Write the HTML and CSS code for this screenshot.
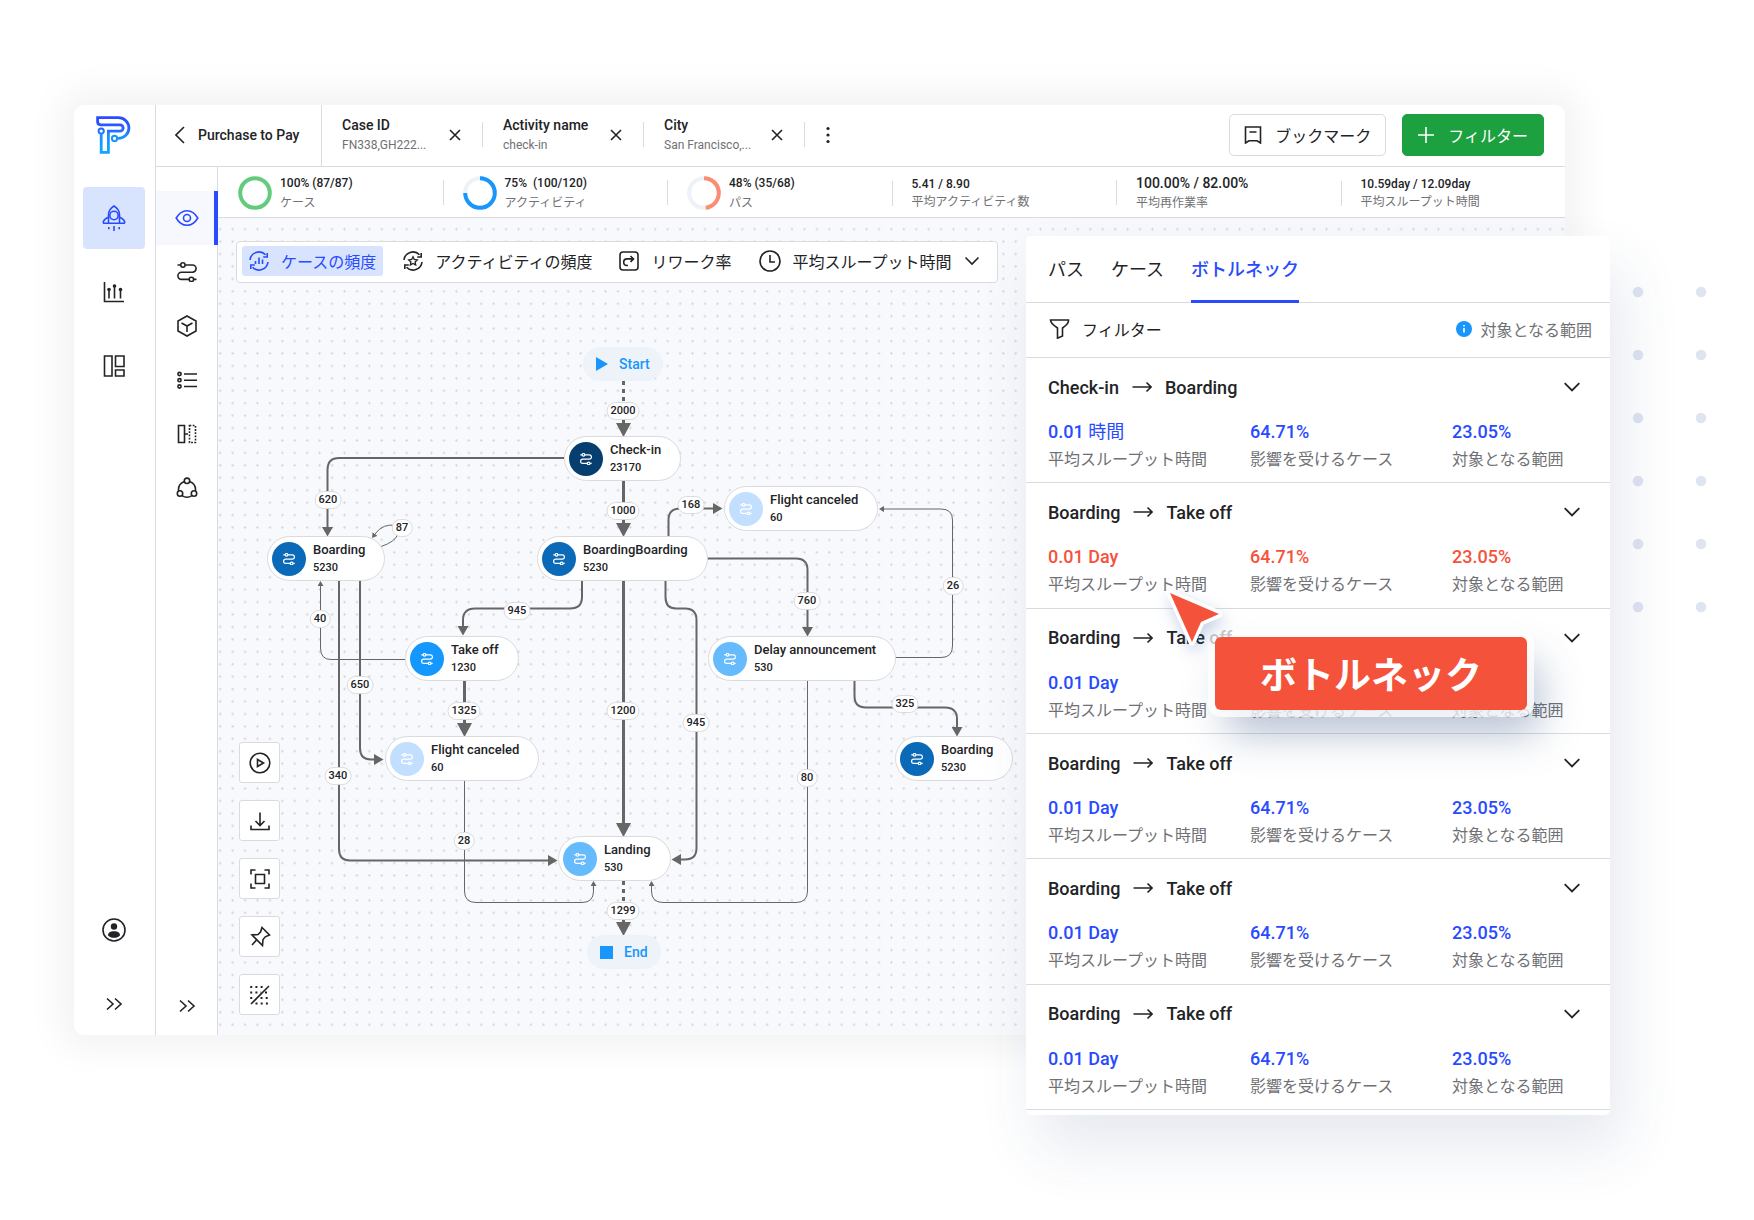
FILE: index.html
```html
<!DOCTYPE html>
<html lang="ja">
<head>
<meta charset="utf-8">
<meta name="viewport" content="width=device-width, initial-scale=1">
<title>Purchase to Pay</title>
<link rel="stylesheet" href="styles.css">
</head>
<body>
<svg class="sprite" aria-hidden="true">
  <symbol id="route" viewBox="0 0 20 20"><path d="M.5 3h3M8.2 3h7.3a3.6 3.6 0 0 1 0 7.2h-11a3.6 3.6 0 0 0 0 7.2h7.6M16.8 17.4h2.7"/><circle cx="5.9" cy="3" r="2.2"/><circle cx="14.4" cy="17.4" r="2.2"/></symbol>
  <symbol id="more" viewBox="0 0 18 14"><path d="M2 1.500l6 5.500-6 5.500M10 1.500l6 5.500-6 5.500"/></symbol>
  <symbol id="down" viewBox="0 0 16 16"><path d="M1.500 4.500L8 11l6.500-6.500"/></symbol>
  <symbol id="close" viewBox="0 0 12 12"><path d="M1 1l10 10M11 1L1 11"/></symbol>
  <symbol id="arrow" viewBox="0 0 20 12"><path d="M.5 6H19M14.500 1.500L19 6l-4.500 4.500"/></symbol>
</svg>

<main class="page">
  <div class="app">
    <nav class="rail" aria-label="Main">
      <svg class="logo" viewBox="0 0 36 38" role="img" aria-label="Logo">
        <defs><linearGradient id="brand" gradientUnits="userSpaceOnUse" x1="0" y1="4" x2="0" y2="32"><stop offset="0" stop-color="#2a4bff"/><stop offset=".35" stop-color="#2668ff"/><stop offset=".55" stop-color="#1a90ff"/><stop offset="1" stop-color="#12a2ff"/></linearGradient></defs>
        <path d="M21.200 22.400H22.500A10.400 10.400 0 0 0 22.500 1.600H1.600V5.500Q1.600 8.900 5 8.900H24A3 3 0 0 1 24 15.200H12.400V36.300H5.200V18" fill="none" stroke="url(#brand)" stroke-width="2.800"/>
        <circle cx="5.200" cy="15" r="2.600" fill="none" stroke="url(#brand)" stroke-width="2"/>
        <circle cx="18.500" cy="22.400" r="2.600" fill="none" stroke="url(#brand)" stroke-width="2"/>
      </svg>
      <button class="rail-item active" aria-label="Process">
        <svg width="24" height="26" viewBox="0 0 24 26"><path d="M6.500 18V10C6.500 5.500 9 2.800 12 1c3 1.800 5.500 4.500 5.500 9v8M1 18.300h22M1.200 18c0-2.500 2-4.500 5.300-6M22.800 18c0-2.500-2-4.500-5.300-6"/><circle cx="12" cy="10.500" r="4.200"/><path d="M12 21v5M6.800 22v2.200M17.200 22v2.200"/></svg>
      </button>
      <button class="rail-item" aria-label="Charts">
        <svg width="22" height="22" viewBox="0 0 22 22"><path d="M1.500 1v19.500H21M6 17.500V9M11.500 17.500V6M17.500 17.500V9"/><g fill="currentColor" stroke="none"><circle cx="6" cy="8.500" r="1.800"/><circle cx="11.500" cy="5" r="1.800"/><circle cx="17.500" cy="8.500" r="1.800"/></g></svg>
      </button>
      <button class="rail-item" aria-label="Dashboard">
        <svg width="22" height="22" viewBox="0 0 22 22"><path d="M1.500 1h7.500v20H1.500zM12.500 1H21v10.500h-8.500zM12.500 15H21v6h-8.500z"/></svg>
      </button>
      <span class="spacer"></span>
      <button class="rail-item" aria-label="Account">
        <svg width="24" height="24" viewBox="0 0 24 24"><circle cx="12" cy="12" r="11"/><g fill="currentColor" stroke="none"><circle cx="12" cy="8.500" r="3.200"/><path d="M6 17.500c0-3 2.500-4.300 6-4.300s6 1.300 6 4.300c-1.500 1.600-3.500 2.300-6 2.300s-4.500-.7-6-2.300z"/></g></svg>
      </button>
      <button class="rail-item" aria-label="Expand"><svg width="18" height="14"><use href="#more"/></svg></button>
    </nav>

    <div class="workspace">
      <header class="topbar">
        <button class="back"><svg width="10" height="18" viewBox="0 0 10 18"><path d="M9 1L1 9l8 8"/></svg>Purchase to Pay</button>
        <div class="chip"><div><b>Case ID</b><small>FN338,GH222...</small></div><button aria-label="Remove Case ID"><svg width="12" height="12"><use href="#close"/></svg></button></div>
        <div class="chip"><div><b>Activity name</b><small>check-in</small></div><button aria-label="Remove Activity name"><svg width="12" height="12"><use href="#close"/></svg></button></div>
        <div class="chip"><div><b>City</b><small>San Francisco,...</small></div><button aria-label="Remove City"><svg width="12" height="12"><use href="#close"/></svg></button></div>
        <button class="kebab" aria-label="More"><svg width="4" height="18" viewBox="0 0 4 18"><g fill="currentColor" stroke="none"><circle cx="2" cy="2.500" r="1.600"/><circle cx="2" cy="9" r="1.600"/><circle cx="2" cy="15.500" r="1.600"/></g></svg></button>
        <span class="spacer"></span>
        <button class="btn"><svg width="18" height="18" viewBox="0 0 18 18"><path d="M1.500 1h15v16L13 14.800H5L1.500 17zM5.500 6h7"/></svg>ブックマーク</button>
        <button class="btn primary"><svg width="16" height="16" viewBox="0 0 16 16"><path d="M8 0v16M0 8h16"/></svg>フィルター</button>
      </header>

      <div class="lower">
        <nav class="subrail" aria-label="View">
          <button class="sub-item active" aria-label="Overview"><svg width="24" height="18" viewBox="0 0 24 18"><path d="M1.200 9C4 4.200 7.500 1.700 12 1.700S20 4.200 22.800 9C20 13.800 16.500 16.300 12 16.300S4 13.800 1.200 9z"/><circle cx="12" cy="9" r="3.500"/></svg></button>
          <button class="sub-item" aria-label="Route"><svg width="20" height="20"><use href="#route"/></svg></button>
          <button class="sub-item" aria-label="Object"><svg width="20" height="22" viewBox="0 0 20 22"><path d="M10 1l9 5v10l-9 5-9-5V6zM4.500 8L10 11l5.500-3M10 11v6"/></svg></button>
          <button class="sub-item" aria-label="List"><svg width="20" height="18" viewBox="0 0 20 18"><path d="M7 3h13M7 9.200h13M7 15.500h13"/><circle cx="2.500" cy="3" r="1.600"/><circle cx="2.500" cy="9.200" r="1.600"/><circle cx="2.500" cy="15.500" r="1.600"/></svg></button>
          <button class="sub-item" aria-label="Compare"><svg width="20" height="20" viewBox="0 0 20 20"><path d="M1.500 1.500h6v17h-6zM8 10h3"/><path d="M12.500 1.500h6v17h-6z" stroke-dasharray="1.800 1.400"/></svg></button>
          <button class="sub-item" aria-label="Cycle"><svg width="22" height="22" viewBox="0 0 22 22"><circle cx="11" cy="3.800" r="2.700"/><circle cx="4" cy="16.500" r="2.700"/><circle cx="18" cy="16.500" r="2.700"/><path d="M8.300 4.600C4 6.300 2.100 10 2.600 14.100M13.700 4.600C18 6.300 19.900 10 19.400 14.100M6 18.600C9 20.600 13 20.600 16 18.600"/></svg></button>
          <span class="spacer"></span>
          <button class="sub-item" aria-label="Expand"><svg width="18" height="14"><use href="#more"/></svg></button>
        </nav>

        <section class="content">
          <div class="stats">
            <div class="stat"><svg class="ring" viewBox="0 0 34 34"><circle cx="17" cy="17" r="14.800" stroke="#63cc7c"/></svg><div><b>100% (87/87)</b><small>ケース</small></div></div>
            <div class="stat"><svg class="ring" viewBox="0 0 34 34"><circle cx="17" cy="17" r="14.800" stroke="#ecf2f8"/><circle cx="17" cy="17" r="14.800" stroke="#1896fc" pathLength="100" stroke-dasharray="75 100" transform="rotate(-90 17 17)"/></svg><div><b>75%&nbsp; (100/120)</b><small>アクティビティ</small></div></div>
            <div class="stat"><svg class="ring" viewBox="0 0 34 34"><circle cx="17" cy="17" r="14.800" stroke="#ecf2f8"/><circle cx="17" cy="17" r="14.800" stroke="#fc8d75" pathLength="100" stroke-dasharray="48 100" transform="rotate(-90 17 17)"/></svg><div><b>48% (35/68)</b><small>パス</small></div></div>
            <div class="stat plain"><div><b>5.41 / 8.90</b><small>平均アクティビティ数</small></div></div>
            <div class="stat large"><div><b>100.00% / 82.00%</b><small>平均再作業率</small></div></div>
            <div class="stat plain"><div><b>10.59day / 12.09day</b><small>平均スループット時間</small></div></div>
          </div>

          <div class="canvas">
            <svg class="edges" aria-hidden="true">
              <defs>
                <pattern id="dots" width="12.430" height="12.430" patternUnits="userSpaceOnUse" x="-4" y="5"><circle cx="6.200" cy="6.200" r="1.100" fill="#cfd1d7"/></pattern>
                <marker id="big" markerUnits="userSpaceOnUse" markerWidth="15" markerHeight="15" refX="0" refY="7.500" orient="auto"><path d="M0 0l14 7.500-14 7.500z" fill="#666"/></marker>
                <marker id="mid" markerUnits="userSpaceOnUse" markerWidth="10" markerHeight="11" refX="0" refY="5.500" orient="auto"><path d="M0 0l9.500 5.500-9.500 5.500z" fill="#666"/></marker>
                <marker id="small" markerUnits="userSpaceOnUse" markerWidth="6" markerHeight="6" refX="0" refY="3" orient="auto"><path d="M0 0l5 3-5 3z" fill="#666"/></marker>
              </defs>
              <rect width="100%" height="100%" fill="url(#dots)"/>
              <g class="heavy">
                <path d="M405.500 163v22" stroke-dasharray="4 4"/>
                <path d="M405.500 198v7" marker-end="url(#big)"/>
                <path d="M405.500 263v42" marker-end="url(#big)"/>
                <path d="M405.500 363v242" marker-end="url(#big)"/>
                <path d="M405.500 663v22" stroke-dasharray="4 4"/>
                <path d="M405.500 698v6" marker-end="url(#big)"/>
                <path d="M246.500 463v42" marker-end="url(#big)"/>
              </g>
              <g class="medium">
                <path d="M346 240H121Q109.500 240 109.500 252V309" marker-end="url(#mid)"/>
                <path d="M121 363V631Q121 642.500 132 642.500H330" marker-end="url(#mid)"/>
                <path d="M142 363V530Q142 541.500 153 541.500H156" marker-end="url(#mid)"/>
                <path d="M450.500 320V302Q450.500 290.500 462 290.500H495" marker-end="url(#mid)"/>
                <path d="M489 340.500H578Q589.500 340.500 589.500 352V409" marker-end="url(#mid)"/>
                <path d="M364 363V379Q364 390.500 352 390.500H257Q245 390.500 245 402V408" marker-end="url(#mid)"/>
                <path d="M447.500 363V379Q447.500 390.500 458 390.500H467Q478.500 390.500 478.500 402V630Q478.500 641.500 467 641.500H463" marker-end="url(#mid)"/>
                <path d="M636.500 463V478Q636.500 489.500 648 489.500H727Q739 489.500 739 501V509" marker-end="url(#mid)"/>
              </g>
              <g class="light">
                <path d="M163 328.500Q177 324 180 316"/>
                <path d="M178 307.500Q165 305 157 316" marker-end="url(#small)"/>
                <path d="M187 441.500H113Q102.500 441.500 102.500 430V368" marker-end="url(#small)"/>
                <path d="M246.500 563V673Q246.500 684.500 258 684.500H364Q375.500 684.500 375.500 673V668" marker-end="url(#small)"/>
                <path d="M589.500 463V673Q589.500 684.500 578 684.500H445Q433.500 684.500 433.500 673V668" marker-end="url(#small)"/>
                <path d="M675 439.500H723Q734.500 439.500 734.500 428V302Q734.500 291 723 291H666" marker-end="url(#small)"/>
              </g>
            </svg>

            <span class="terminal" style="left:365px;top:129px"><svg width="12" height="14" viewBox="0 0 12 14"><path d="M0 0l12 7-12 7z"/></svg>Start</span>
            <span class="terminal" style="left:369px;top:717px"><svg width="13" height="13" viewBox="0 0 13 13"><path d="M0 0h13v13H0z"/></svg>End</span>

            <button class="node tone-5" style="left:346px;top:218px"><i><svg><use href="#route"/></svg></i><span><b>Check-in</b><small>23170</small></span></button>
            <button class="node tone-1" style="left:506px;top:268px"><i><svg><use href="#route"/></svg></i><span><b>Flight canceled</b><small>60</small></span></button>
            <button class="node tone-4" style="left:49px;top:318px"><i><svg><use href="#route"/></svg></i><span><b>Boarding</b><small>5230</small></span></button>
            <button class="node tone-4" style="left:319px;top:318px"><i><svg><use href="#route"/></svg></i><span><b>BoardingBoarding</b><small>5230</small></span></button>
            <button class="node tone-3" style="left:187px;top:418px"><i><svg><use href="#route"/></svg></i><span><b>Take off</b><small>1230</small></span></button>
            <button class="node tone-2" style="left:490px;top:418px"><i><svg><use href="#route"/></svg></i><span><b>Delay announcement</b><small>530</small></span></button>
            <button class="node tone-1" style="left:167px;top:518px"><i><svg><use href="#route"/></svg></i><span><b>Flight canceled</b><small>60</small></span></button>
            <button class="node tone-4" style="left:677px;top:518px"><i><svg><use href="#route"/></svg></i><span><b>Boarding</b><small>5230</small></span></button>
            <button class="node tone-2" style="left:340px;top:618px"><i><svg><use href="#route"/></svg></i><span><b>Landing</b><small>530</small></span></button>

            <span class="count" style="left:405px;top:193px">2000</span>
            <span class="count" style="left:405px;top:293px">1000</span>
            <span class="count" style="left:110px;top:282px">620</span>
            <span class="count" style="left:184px;top:310px">87</span>
            <span class="count" style="left:102px;top:401px">40</span>
            <span class="count" style="left:142px;top:467px">650</span>
            <span class="count" style="left:473px;top:287px">168</span>
            <span class="count" style="left:299px;top:393px">945</span>
            <span class="count" style="left:589px;top:383px">760</span>
            <span class="count" style="left:735px;top:368px">26</span>
            <span class="count" style="left:687px;top:486px">325</span>
            <span class="count" style="left:478px;top:505px">945</span>
            <span class="count" style="left:246px;top:493px">1325</span>
            <span class="count" style="left:405px;top:493px">1200</span>
            <span class="count" style="left:589px;top:560px">80</span>
            <span class="count" style="left:246px;top:623px">28</span>
            <span class="count" style="left:120px;top:558px">340</span>
            <span class="count" style="left:405px;top:693px">1299</span>

            <div class="toolbar">
              <button class="mode active"><svg width="20" height="20" viewBox="0 0 20 20"><path d="M1 9A9 9 0 0 1 16.500 3.800M19 11A9 9 0 0 1 3.500 16.200M18.200 2v4h-4M1.800 18v-4h4M6.500 13V10M10 13V6.500M13.500 13V8.500"/></svg>ケースの頻度</button>
              <button class="mode"><svg width="20" height="20" viewBox="0 0 20 20"><path d="M1 9A9 9 0 0 1 16.500 3.800M19 11A9 9 0 0 1 3.500 16.200M18.200 2v4h-4M1.800 18v-4h4"/><path d="M10 5.800l1.300 2.700 3 .4-2.200 2.100.6 3-2.700-1.500-2.700 1.500.6-3-2.200-2.100 3-.4z" stroke-width="1.300"/></svg>アクティビティの頻度</button>
              <button class="mode"><svg width="20" height="20" viewBox="0 0 20 20"><rect x="1" y="1" width="18" height="18" rx="3"/><path d="M9 14.500H8a3.300 3.300 0 0 1 0-6.600h6M11.500 5l3 2.900-3 2.900"/></svg>リワーク率</button>
              <button class="mode"><svg width="22" height="22" viewBox="0 0 22 22"><circle cx="11" cy="11" r="10"/><path d="M11 5v7h5"/></svg>平均スループット時間<svg width="16" height="16"><use href="#down"/></svg></button>
            </div>

            <div class="tools">
              <button aria-label="Play"><svg viewBox="0 0 22 22"><circle cx="11" cy="11" r="9.800"/><path d="M8.500 7.500l6 3.500-6 3.500z"/></svg></button>
              <button aria-label="Download"><svg viewBox="0 0 22 22"><path d="M11 2.500v12.500M6.500 11l4.500 4.500 4.500-4.500M2 15.500v4h18v-4"/></svg></button>
              <button aria-label="Fit"><svg viewBox="0 0 22 22"><path d="M2 6.500V2h4.500M15.500 2H20v4.500M20 15.500V20h-4.500M6.500 20H2v-4.500M6.500 6.500h9v9h-9z"/></svg></button>
              <button aria-label="Pin"><svg viewBox="0 0 22 22"><path d="M13 1.500L20.500 9l-4.200 1.800L14 13.500l-.5 6L3 9l6-.5L11.500 6zM7.500 14L3 19"/></svg></button>
              <button aria-label="Hide grid"><svg viewBox="0 0 22 22"><path d="M2 20L20 2"/><path d="M1.200 3h15M1.200 8.500h11M1.200 14h5M16 8.500h5M11.500 14H21M6.500 19.500H21" stroke-width="2" stroke-dasharray="2 3.200"/></svg></button>
            </div>
          </div>
        </section>
      </div>
    </div>
  </div>

  <svg class="backdrop" aria-hidden="true"><defs><pattern id="bigdots" width="63" height="63" patternUnits="userSpaceOnUse"><circle cx="6" cy="6" r="5.300" fill="#dfe4f1"/></pattern></defs><rect width="100%" height="100%" fill="url(#bigdots)"/></svg>

  <aside class="panel">
    <div class="tabs" role="tablist">
      <button role="tab">パス</button>
      <button role="tab">ケース</button>
      <button role="tab" aria-selected="true" class="active">ボトルネック</button>
    </div>
    <div class="filter">
      <button><svg width="21" height="20" viewBox="0 0 21 20"><path d="M1.500 1h18c.5 3-1.500 5-6 8v8l-5 2.200V9C4 6 1.500 4 1.500 1z"/></svg>フィルター</button>
      <span class="note"><svg width="16" height="16" viewBox="0 0 16 16"><circle cx="8" cy="8" r="8" fill="#1896fc"/><path d="M8 7v4.500M8 4v1.600" stroke="#fff" stroke-width="1.600"/></svg>対象となる範囲</span>
    </div>
    <ul class="paths">
      <li><h3>Check-in<svg width="20" height="12"><use href="#arrow"/></svg>Boarding<button aria-label="Open"><svg width="18" height="18"><use href="#down"/></svg></button></h3>
        <dl><div><dd>0.01 <span class="unit">時間</span></dd><dt>平均スループット時間</dt></div><div><dd>64.71%</dd><dt>影響を受けるケース</dt></div><div><dd>23.05%</dd><dt>対象となる範囲</dt></div></dl></li>
      <li class="alert"><h3>Boarding<svg width="20" height="12"><use href="#arrow"/></svg>Take off<button aria-label="Open"><svg width="18" height="18"><use href="#down"/></svg></button></h3>
        <dl><div><dd>0.01 Day</dd><dt>平均スループット時間</dt></div><div><dd>64.71%</dd><dt>影響を受けるケース</dt></div><div><dd>23.05%</dd><dt>対象となる範囲</dt></div></dl></li>
      <li><h3>Boarding<svg width="20" height="12"><use href="#arrow"/></svg>Take off<button aria-label="Open"><svg width="18" height="18"><use href="#down"/></svg></button></h3>
        <dl><div><dd>0.01 Day</dd><dt>平均スループット時間</dt></div><div><dd>64.71%</dd><dt>影響を受けるケース</dt></div><div><dd>23.05%</dd><dt>対象となる範囲</dt></div></dl></li>
      <li><h3>Boarding<svg width="20" height="12"><use href="#arrow"/></svg>Take off<button aria-label="Open"><svg width="18" height="18"><use href="#down"/></svg></button></h3>
        <dl><div><dd>0.01 Day</dd><dt>平均スループット時間</dt></div><div><dd>64.71%</dd><dt>影響を受けるケース</dt></div><div><dd>23.05%</dd><dt>対象となる範囲</dt></div></dl></li>
      <li><h3>Boarding<svg width="20" height="12"><use href="#arrow"/></svg>Take off<button aria-label="Open"><svg width="18" height="18"><use href="#down"/></svg></button></h3>
        <dl><div><dd>0.01 Day</dd><dt>平均スループット時間</dt></div><div><dd>64.71%</dd><dt>影響を受けるケース</dt></div><div><dd>23.05%</dd><dt>対象となる範囲</dt></div></dl></li>
      <li><h3>Boarding<svg width="20" height="12"><use href="#arrow"/></svg>Take off<button aria-label="Open"><svg width="18" height="18"><use href="#down"/></svg></button></h3>
        <dl><div><dd>0.01 Day</dd><dt>平均スループット時間</dt></div><div><dd>64.71%</dd><dt>影響を受けるケース</dt></div><div><dd>23.05%</dd><dt>対象となる範囲</dt></div></dl></li>
    </ul>
    <strong class="callout">ボトルネック</strong>
    <svg class="pointer" viewBox="0 0 60 60" aria-hidden="true"><path d="M5 5L54 26 36 34 27 54z" fill="#fff" stroke="#fff" stroke-width="7" stroke-linejoin="round"/><path d="M5 5L54 26 36 34 27 54z" fill="#f5523b"/></svg>
  </aside>
</main>
</body>
</html>
```

FILE: styles.css
```css
:root {
  --ink: #222326;
  --muted: #707175;
  --line: #dadbdf;
  --blue: #294bff;
  --tint: #d8e4fd;
  --canvas: #f8f9fc;
}

* { box-sizing: border-box; }

body {
  margin: 0;
  background: #fff;
  color: var(--ink);
  font-family: Roboto, "Noto Sans CJK JP", sans-serif;
  font-size: 16px;
}

button {
  margin: 0;
  padding: 0;
  border: 0;
  background: none;
  color: inherit;
  font: inherit;
  cursor: pointer;
}

svg {
  flex: none;
  fill: none;
  stroke: currentColor;
  stroke-width: 1.6;
}

b, h3, dd { font-weight: 500; }
small { font-size: 12px; color: var(--muted); }

.sprite { position: absolute; width: 0; height: 0; }
.spacer { flex: 1; }

.page {
  position: relative;
  display: grid;
  min-height: 100vh;
  padding: 105px 189px 185px 74px;
  overflow: hidden;
}

.app {
  display: flex;
  min-width: 0;
  border-radius: 10px;
  background: #fff;
  box-shadow: 0 0 36px 14px rgba(0, 0, 0, .05);
}

/* Main navigation */
.rail {
  display: flex;
  flex-direction: column;
  align-items: center;
  gap: 12px;
  width: 82px;
  padding: 11px 1px 0 0;
  border-right: 1px solid var(--line);
}
.logo { width: 36px; height: 38px; margin-bottom: 21px; }
.rail-item {
  display: grid;
  place-items: center;
  width: 62px;
  height: 62px;
  border-radius: 4px;
}
.rail-item.active { background: var(--tint); color: var(--blue); }

.workspace { display: flex; flex: 1; flex-direction: column; min-width: 0; }

/* Top bar */
.topbar {
  display: flex;
  align-items: center;
  height: 62px;
  padding: 0 21px 2px 0;
  border-bottom: 1px solid var(--line);
}
.back {
  display: flex;
  align-items: center;
  align-self: stretch;
  gap: 13px;
  width: 166px;
  margin-bottom: -2px;
  padding: 0 0 2px 19px;
  border-right: 1px solid var(--line);
  font-size: 14px;
  font-weight: 500;
}
.chip {
  display: flex;
  align-items: center;
  justify-content: space-between;
  width: 161px;
  padding: 0 22px 0 20px;
  position: relative;
  white-space: nowrap;
}
.chip::after, .stat + .stat::before {
  content: "";
  position: absolute;
  right: 0;
  width: 1px;
  height: 25px;
  background: var(--line);
}
.chip b, .chip small { display: block; line-height: 20px; }
.chip b { font-size: 14px; }
.chip button, .kebab { display: grid; place-items: center; }
.kebab { width: 46px; height: 40px; }

.btn {
  display: flex;
  align-items: center;
  gap: 13px;
  height: 42px;
  padding: 0 14px;
  border: 1px solid var(--line);
  border-radius: 5px;
}
.btn.primary {
  gap: 14px;
  margin-left: 16px;
  padding: 0 15px;
  border-color: #1da03f;
  background: #1da03f;
  color: #fff;
}

.lower { display: flex; flex: 1; }

/* Secondary navigation */
.subrail {
  display: flex;
  flex-direction: column;
  width: 62px;
  padding: 24px 0 2px;
  border-right: 1px solid var(--line);
}
.sub-item { display: grid; place-items: center; height: 54px; }
.sub-item.active {
  margin-right: -1px;
  padding-left: 4px;
  border-right: 4px solid var(--blue);
  background: #f6f8fd;
  color: var(--blue);
}

.content { display: flex; flex: 1; flex-direction: column; min-width: 0; }

/* Figures under the top bar */
.stats {
  display: grid;
  grid-template-columns: repeat(6, 1fr);
  height: 51px;
  border-bottom: 1px solid var(--line);
}
.stat {
  display: flex;
  align-items: center;
  gap: 8px;
  position: relative;
  padding: 1px 0 0 20px;
  white-space: nowrap;
}
.stat + .stat::before { right: auto; left: 0; }
.stat b, .stat small { display: block; line-height: 20px; }
.stat b { font-size: 12px; }
.stat.plain b, .stat.plain small { line-height: 18px; }
.stat.plain { padding-top: 2px; }
.stat.large b { font-size: 14px; }
.ring { width: 34px; height: 34px; stroke-width: 4; }

/* Process map */
.canvas {
  position: relative;
  flex: 1;
  min-height: 780px;
  overflow: hidden;
  border-bottom-right-radius: 10px;
  background: var(--canvas);
}
.edges { position: absolute; width: 100%; height: 100%; stroke: none; }
.edges g { stroke: #666; }
.edges marker path { stroke: none; }
.heavy { stroke-width: 3; }
.medium { stroke-width: 2; }
.light { stroke-width: 1; }

.terminal, .node, .count { position: absolute; white-space: nowrap; }
.terminal {
  display: flex;
  align-items: center;
  gap: 11px;
  height: 34px;
  padding: 0 13px;
  border-radius: 17px;
  background: #edf3f9;
  color: #1896fc;
  font-size: 14px;
  font-weight: 500;
}
.terminal svg { fill: currentColor; stroke: none; }

.node {
  display: flex;
  align-items: center;
  gap: 7px;
  height: 45px;
  padding: 0 19px 0 4px;
  border: 1px solid var(--line);
  border-radius: 23px;
  background: #fff;
  text-align: left;
}
.node i {
  display: grid;
  place-items: center;
  width: 34px;
  height: 34px;
  border-radius: 50%;
  color: #fff;
}
.node i svg { width: 12px; height: 12px; stroke-width: 2; }
.node b, .node small { display: block; line-height: 18px; }
.node b { font-size: 13px; }
.node small { color: var(--ink); font-size: 11px; font-weight: 500; }
.tone-1 i { background: #c3dfff; }
.tone-2 i { background: #66bbfd; }
.tone-3 i { background: #1498ff; }
.tone-4 i { background: #0a6ab7; }
.tone-5 i { background: #063f6f; }

.count {
  height: 18px;
  padding: 0 3px;
  border: 1px solid var(--line);
  border-radius: 9px;
  background: #fff;
  font-size: 11px;
  font-weight: 500;
  line-height: 16px;
  transform: translate(-50%, -50%);
}

.toolbar {
  position: absolute;
  top: 23px;
  left: 18px;
  display: flex;
  align-items: center;
  gap: 13px;
  height: 42px;
  padding: 0 10px 2px 5px;
  border: 1px solid var(--line);
  border-radius: 4px;
  background: #fff;
}
.mode {
  display: flex;
  align-items: center;
  gap: 12px;
  height: 30px;
  padding: 0 7px;
  border-radius: 3px;
  white-space: nowrap;
}
.mode.active { background: var(--tint); color: var(--blue); }

.tools {
  position: absolute;
  bottom: 20px;
  left: 21px;
  display: grid;
  gap: 17px;
}
.tools button {
  display: grid;
  place-items: center;
  width: 41px;
  height: 41px;
  border: 1px solid var(--line);
  border-radius: 3px;
  background: #fff;
}
.tools svg { width: 22px; height: 22px; }

/* Dot grid beside the panel */
.backdrop {
  position: absolute;
  top: 286px;
  right: 47px;
  width: 75px;
  height: 327px;
  stroke: none;
}

/* Bottleneck panel */
.panel {
  position: absolute;
  top: 236px;
  right: 144px;
  bottom: 105px;
  display: flex;
  flex-direction: column;
  width: 584px;
  padding-bottom: 5px;
  border-radius: 5px;
  background: #fff;
  box-shadow: 12px 32px 60px rgba(50, 70, 130, .12);
}
.tabs {
  display: flex;
  gap: 27px;
  height: 67px;
  padding: 0 22px;
  border-bottom: 1px solid var(--line);
}
.tabs button { margin-bottom: -1px; font-size: 18px; border-bottom: 3px solid transparent; }
.tabs .active { border-color: var(--blue); color: var(--blue); font-weight: 500; }
.filter {
  display: flex;
  align-items: center;
  justify-content: space-between;
  height: 55px;
  padding: 0 18px 2px 23px;
  border-bottom: 1px solid var(--line);
}
.filter button, .note { display: flex; align-items: center; gap: 12px; }
.note { gap: 8px; color: var(--muted); }
.note svg { stroke: none; }

.paths {
  display: grid;
  flex: 1;
  grid-auto-rows: 1fr;
  margin: 0;
  padding: 0;
  list-style: none;
}
.paths li {
  padding: 17px 22px 10px;
  border-bottom: 1px solid var(--line);
}
.paths h3 {
  display: flex;
  align-items: center;
  gap: 13px;
  height: 24px;
  margin: 0 0 21px;
  font-size: 18px;
}
.paths h3 button { display: grid; margin-left: auto; padding-right: 7px; }
.paths dl {
  display: grid;
  grid-template-columns: 202px 202px 1fr;
  margin: 0;
  white-space: nowrap;
}
.paths dl div { display: flex; flex-direction: column; gap: 4px; }
.paths dd { margin: 0; color: var(--blue); font-size: 18px; line-height: 24px; }
.paths dt { color: var(--muted); line-height: 24px; order: 1; }
.paths .alert dd { color: #f5523b; }
.unit { font-weight: 400; }

.callout {
  position: absolute;
  top: 401px;
  left: 189px;
  width: 312px;
  padding-top: 6px;
  border-radius: 6px;
  background: #f5523b;
  box-shadow: 0 0 0 7px rgba(255, 255, 255, .75), 12px 24px 40px rgba(50, 80, 130, .35);
  color: #fff;
  font-size: 37px;
  font-weight: 700;
  line-height: 67px;
  text-align: center;
}
.pointer {
  position: absolute;
  top: 352px;
  left: 139px;
  width: 60px;
  height: 60px;
  stroke: none;
  filter: drop-shadow(2px 6px 8px rgba(60, 100, 170, .3));
}
```
